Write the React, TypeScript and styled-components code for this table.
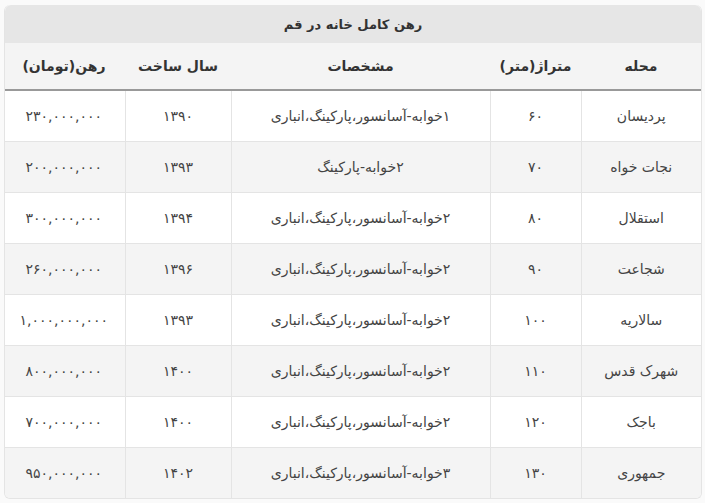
import React from "react";
import styled, { createGlobalStyle } from "styled-components";

const Global = createGlobalStyle`
  html, body { margin: 0; padding: 0; background: #fafafa; }
  body { font-family: "DejaVu Sans", "Noto Sans", sans-serif; }
`;

const Wrap = styled.div`
  padding: 5px 3px 0 3px;
  direction: rtl;
`;

const Frame = styled.div`
  width: 698px;
  border-radius: 6px;
  border: 1px solid #e4e4e4;
  border-top: none;
  overflow: hidden;
  box-sizing: border-box;
`;

const Caption = styled.div`
  height: 38px;
  background: #e6e6e6;
  color: #333;
  font-size: 13px;
  font-weight: bold;
  display: flex;
  align-items: center;
  justify-content: center;
  border-radius: 6px 6px 0 0;
`;

const Table = styled.table`
  width: 100%;
  border-collapse: collapse;
  table-layout: fixed;
`;

const HeadCell = styled.th<{ $w: number }>`
  width: ${(p) => p.$w}px;
  height: 46px;
  background: #f4f4f4;
  color: #333;
  font-size: 14px;
  font-weight: bold;
  text-align: center;
  border-bottom: 2px solid #999;
  padding: 0;
`;

const Row = styled.tr<{ $alt: boolean }>`
  background: ${(p) => (p.$alt ? "#f4f4f4" : "#ffffff")};
`;

const Cell = styled.td`
  height: 50px;
  color: #444;
  font-size: 14px;
  text-align: center;
  padding: 0;
  border-left: 1px solid #e4e4e4;
  border-top: 1px solid #e4e4e4;
  &:last-child { border-left: none; }
`;

const cols = [
  { t: "محله", w: 120 },
  { t: "متراژ(متر)", w: 91 },
  { t: "مشخصات", w: 259 },
  { t: "سال ساخت", w: 106 },
  { t: "رهن(تومان)", w: 122 },
];

const full = "خوابه-آسانسور،پارکینگ،انباری";

const rows = [
  ["پردیسان", "۶۰", "۱" + full, "۱۳۹۰", "۲۳۰,۰۰۰,۰۰۰"],
  ["نجات خواه", "۷۰", "۲خوابه-پارکینگ", "۱۳۹۳", "۲۰۰,۰۰۰,۰۰۰"],
  ["استقلال", "۸۰", "۲" + full, "۱۳۹۴", "۳۰۰,۰۰۰,۰۰۰"],
  ["شجاعت", "۹۰", "۲" + full, "۱۳۹۶", "۲۶۰,۰۰۰,۰۰۰"],
  ["سالاریه", "۱۰۰", "۲" + full, "۱۳۹۳", "۱,۰۰۰,۰۰۰,۰۰۰"],
  ["شهرک قدس", "۱۱۰", "۲" + full, "۱۴۰۰", "۸۰۰,۰۰۰,۰۰۰"],
  ["باجک", "۱۲۰", "۲" + full, "۱۴۰۰", "۷۰۰,۰۰۰,۰۰۰"],
  ["جمهوری", "۱۳۰", "۳" + full, "۱۴۰۲", "۹۵۰,۰۰۰,۰۰۰"],
];

export default function App() {
  return (
    <>
      <Global />
      <Wrap>
        <Frame>
          <Caption>رهن کامل خانه در قم</Caption>
          <Table>
            <thead>
              <tr>
                {cols.map((c) => (
                  <HeadCell key={c.t} $w={c.w}>
                    {c.t}
                  </HeadCell>
                ))}
              </tr>
            </thead>
            <tbody>
              {rows.map((r, i) => (
                <Row key={i} $alt={i % 2 === 1}>
                  {r.map((v, j) => (
                    <Cell key={j}>{v}</Cell>
                  ))}
                </Row>
              ))}
            </tbody>
          </Table>
        </Frame>
      </Wrap>
    </>
  );
}
